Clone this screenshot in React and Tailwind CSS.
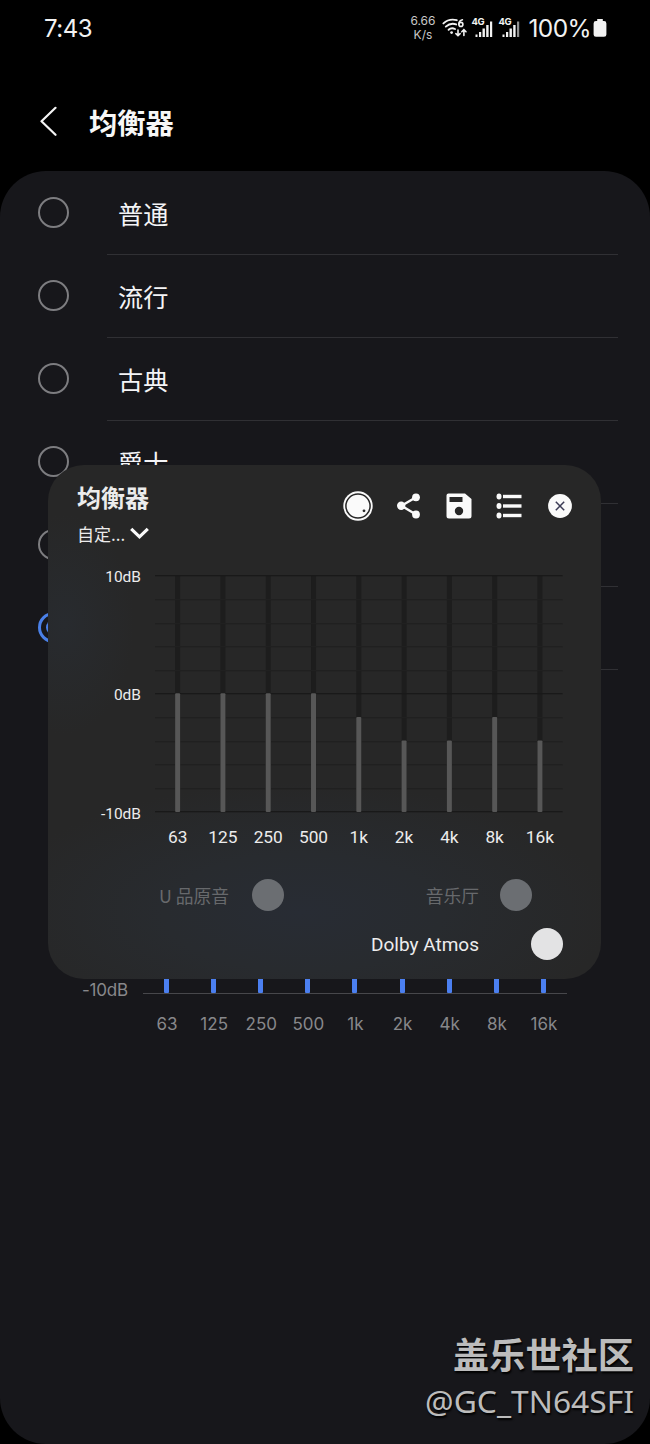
import React from "react";

const BANDS = [
  { label: "63", gain: 0 },
  { label: "125", gain: 0 },
  { label: "250", gain: 0 },
  { label: "500", gain: 0 },
  { label: "1k", gain: -2 },
  { label: "2k", gain: -4 },
  { label: "4k", gain: -4 },
  { label: "8k", gain: -2 },
  { label: "16k", gain: -4 },
];

const PRESETS = [
  { id: 1, label: "普通" },
  { id: 2, label: "流行" },
  { id: 3, label: "古典" },
  { id: 4, label: "爵士" },
  { id: 5, label: "" },
  { id: 6, label: "", selected: true },
];

function WifiIcon() {
  return (
    <svg className="h-[22px] w-[26px] shrink-0" viewBox="0 0 26 22" fill="none" stroke="#f2f2f2" strokeWidth="1.9" strokeLinecap="round">
      <path d="M1.400 6.400C5 3.100 10 2 14.800 3.200" />
      <path d="M3.800 9.600C6.800 7 10.600 6.200 14.200 7.400" />
      <path d="M6.600 12.800C8.200 11.300 10.800 10.900 13 12" />
      <circle cx="9.600" cy="15.600" r="1.400" fill="#f2f2f2" stroke="none" />
      <path d="M20.400 2.800C18 3.400 16.900 5 16.900 7.200" strokeWidth="1.600" />
      <circle cx="18.900" cy="7.400" r="2" strokeWidth="1.600" />
      <path d="M16 13v5.400M13.900 16.600l2.100 2.100 2.100-2.100M21.900 18.400V13M19.800 14.800l2.100-2.100 2.100 2.100" strokeWidth="1.600" />
    </svg>
  );
}

function Signal({ dim }) {
  return (
    <div className="relative h-[22px] w-[24px] shrink-0">
      <span className="absolute left-0 top-0 font-['Inter'] text-[9.5px] font-bold leading-[10px] tracking-[-0.5px] text-[#f2f2f2]">4G</span>
      <svg className="absolute bottom-[1px] left-[4px] h-[18px] w-[20px]" viewBox="0 0 20 18" fill="#f2f2f2">
        <rect x="0.500" y="14.5" width="2" height="2.5" />
        <rect x="4" y="12" width="2.200" height="5" />
        <rect x="7.500" y="8.5" width="2.400" height="8.5" />
        <rect x="11.200" y="5" width="2.400" height="12" />
        <rect x="15" y="1.5" width="2.200" height="15.5" opacity={dim ? 0.6 : 1} />
      </svg>
    </div>
  );
}

function StatusBar() {
  return (
    <div className="flex h-[56px] items-center pl-[44px] pr-[43px] font-['Inter'] text-[#f2f2f2]">
      <span className="mt-[1px] text-[24px] leading-none tracking-[-0.45px]">7:43</span>
      <div className="ml-auto flex items-center">
        <div className="mr-[6px] w-[27px] text-center text-[12px] leading-[14px] text-[#c8c8c8]">
          <div>6.66</div>
          <div>K/s</div>
        </div>
        <WifiIcon />
        <div className="ml-[3px] flex gap-[3px]">
          <Signal />
          <Signal dim />
        </div>
        <span className="ml-[6px] text-[24.5px] leading-none tracking-[-0.6px]">100%</span>
        <svg className="ml-[2px] h-[20px] w-[14px]" viewBox="0 0 14 20" fill="#f2f2f2">
          <path d="M4.2 1h5.6v2H11a2.4 2.4 0 0 1 2.4 2.4v11A2.4 2.4 0 0 1 11 18.800H3A2.4 2.4 0 0 1 .6 16.400v-11A2.400 2.400 0 0 1 3 3h1.200z" />
        </svg>
      </div>
    </div>
  );
}

function TopBar() {
  return (
    <div className="flex h-[115px] items-center pl-[39px]">
      <svg className="mt-[15px] h-[30px] w-[20px]" viewBox="0 0 20 30" fill="none" stroke="#f4f4f4" strokeWidth="2.200" strokeLinecap="round" strokeLinejoin="round">
        <path d="M16.500 1.800 2.500 15.300l14 13.500" />
      </svg>
      <h1 className="ml-[30px] mt-[17px] text-[28.3px] font-bold leading-[36px] text-[#f7f7f7]">均衡器</h1>
    </div>
  );
}

function PresetRow({ label, selected }) {
  return (
    <div className="relative flex h-[83px] items-center pl-[38px]">
      {selected ? (
        <span className="flex h-[31px] w-[31px] items-center justify-center rounded-full border-[3px] border-[#4a80e8]">
          <span className="h-[15px] w-[15px] rounded-full bg-[#4a80e8]" />
        </span>
      ) : (
        <span className="h-[31px] w-[31px] rounded-full border-2 border-[#7d7d80]" />
      )}
      <span className="ml-[49px] mt-[1px] text-[25.200px] leading-[36px] text-[#f4f4f6]">{label}</span>
      <span className="absolute bottom-[-1px] left-[107px] right-[32px] h-px bg-[#303034]" />
    </div>
  );
}

function BackgroundEqualizer() {
  return (
    <div className="mt-[304px]">
      <div className="flex">
        <div className="w-[128px] pt-[6px] text-right font-['Inter'] text-[17px] leading-[22px] tracking-[-0.2px] text-[#88888b]">-10dB</div>
        <div className="ml-[15px] grid h-[21px] w-[424px] grid-cols-9 border-b border-[#47474b]">
          {BANDS.map((b) => (
            <div key={b.label} className="flex justify-center">
              <span className="h-[20px] w-[5px] rounded-b-[1px] bg-[#4b7ff0]" />
            </div>
          ))}
        </div>
      </div>
      <div className="ml-[143.500px] mt-[12px] grid w-[424px] grid-cols-9 text-center font-['Inter'] text-[17px] leading-[22px] text-[#88888b]">
        {BANDS.map((b) => (
          <span key={b.label}>{b.label}</span>
        ))}
      </div>
    </div>
  );
}

function DialIcon() {
  return (
    <svg className="h-[32px] w-[32px]" viewBox="0 0 32 32">
      <circle cx="16" cy="16" r="14.700" fill="#fafafa" />
      <circle cx="16" cy="16" r="12.100" fill="none" stroke="#262626" strokeWidth="1.500" />
      <circle cx="22" cy="20.800" r="1.400" fill="#262626" />
    </svg>
  );
}

function ShareIcon() {
  return (
    <svg className="ml-[1px] h-[26px] w-[26px]" viewBox="0 0 26 26" fill="#fafafa" stroke="#fafafa">
      <path d="M20 4.300 5.500 12.800 20 21.500" fill="none" strokeWidth="2.400" />
      <circle cx="20" cy="4.300" r="3.900" stroke="none" />
      <circle cx="5.200" cy="12.800" r="4.200" stroke="none" />
      <circle cx="20" cy="21.500" r="3.900" stroke="none" />
    </svg>
  );
}

function SaveIcon() {
  return (
    <svg className="h-[26px] w-[26px]" viewBox="0 0 26 26">
      <path fill="#fafafa" fillRule="evenodd" d="M2.500.500H19L25.500 6v17a2.500 2.500 0 0 1-2.500 2.500H3A2.500 2.500 0 0 1 .500 23V2.500a2 2 0 0 1 2-2zM3.500 4v5h13V4zM13 13.800a4.200 4.200 0 1 0 0 8.400 4.200 4.200 0 0 0 0-8.400z" />
    </svg>
  );
}

function ListIcon() {
  return (
    <svg className="h-[26px] w-[26px]" viewBox="0 0 26 26" fill="#fafafa">
      {[3.500, 13, 22.500].map((y) => (
        <g key={y}>
          <ellipse cx="3" cy={y} rx="2.500" ry="3" />
          <rect x="7" y={y - 1.700} width="18.500" height="3.400" />
        </g>
      ))}
    </svg>
  );
}

function CloseIcon() {
  return (
    <svg className="h-[24px] w-[24px]" viewBox="0 0 24 24">
      <circle cx="12" cy="12" r="11.900" fill="#fafafa" />
      <path d="m7.800 7.800 8.400 8.400m0-8.400-8.400 8.400" stroke="#3b3b55" strokeWidth="1.500" />
    </svg>
  );
}

const TOOLS = [DialIcon, ShareIcon, SaveIcon, ListIcon, CloseIcon];

function Chart() {
  const step = 407.6 / 9;
  return (
    <svg className="h-[240px] w-[408px]" viewBox="0 0 408 240">
      {BANDS.map((b, i) => {
        const x = step * (i + 0.5) - 2.5;
        return <rect key={b.label} x={x} y="1" width="5" height="236" fill="#1d1d1d" />;
      })}
      {Array.from({ length: 11 }, (_, i) => (
        <rect key={i} x="0" y={Math.round(0.400 + i * 23.600)} width="407.600" height="1.300" fill={i % 5 === 0 ? "#191919" : "#202020"} />
      ))}
      {BANDS.map((b, i) => {
        const x = step * (i + 0.5) - 2.5;
        const y = 118.300 - b.gain * 11.800;
        return <rect key={b.label} x={x} y={y} width="5" height={237 - y} rx="1" fill="#575757" />;
      })}
    </svg>
  );
}

function Dialog() {
  return (
    <div className="absolute left-[48px] top-[465px] h-[513.500px] w-[553px] overflow-hidden rounded-[36px] bg-[#272727] bg-[radial-gradient(ellipse_310px_130px_at_46%_87%,#282c34_0%,#282b2f_45%,transparent_100%),radial-gradient(ellipse_70px_110px_at_3%_31%,#282b2f_0%,transparent_100%)] text-[#ececec]">
      <div className="flex h-[110px] justify-between pl-[29px] pr-[16px]">
        <div className="pt-[16px]">
          <h2 className="text-[24px] font-bold leading-[32px]">均衡器</h2>
          <div className="mt-[9px] flex items-center text-[17px] leading-[24px]">
            <span>自定...</span>
            <svg className="ml-[5px] mt-[-2px] h-[13px] w-[19px]" viewBox="0 0 19 13" fill="none" stroke="#fafafa" strokeWidth="3.200">
              <path d="m1.200 1.800 8.300 8 8.300-8" />
            </svg>
          </div>
        </div>
        <div className="flex h-[81px] items-center">
          {TOOLS.map((Icon, i) => (
            <span key={i} className="flex w-[50.500px] justify-center">
              <Icon />
            </span>
          ))}
        </div>
      </div>

      <div className="flex h-[240px]">
        <div className="flex w-[93px] flex-col text-right font-['Roboto'] text-[15.500px] leading-[20px]">
          <span className="mt-[-8px]">10dB</span>
          <span className="mt-[98px]">0dB</span>
          <span className="mt-[98.500px]">-10dB</span>
        </div>
        <div className="ml-[14px]">
          <Chart />
        </div>
      </div>
      <div className="ml-[107px] mt-[10px] grid w-[407.600px] grid-cols-9 text-center font-['Roboto'] text-[17.300px] leading-[24px]">
        {BANDS.map((b) => (
          <span key={b.label}>{b.label}</span>
        ))}
      </div>

      <div className="mt-[29px] flex h-[34px] items-center pl-[111px] pr-[69px] text-[17.800px] leading-[24px] text-[#67696c]">
        <span className="w-[93px] whitespace-nowrap">U 品原音</span>
        <span className="h-[32px] w-[32px] rounded-full bg-[#6b6e72]" />
        <span className="ml-auto mr-[21px]">音乐厅</span>
        <span className="h-[32px] w-[32px] rounded-full bg-[#6b6e72]" />
      </div>
      <div className="mt-[15px] flex h-[34px] items-center justify-end pr-[38px]">
        <span className="mt-[2px] font-['Roboto'] text-[19px] leading-[24px] text-[#ededed]">Dolby Atmos</span>
        <span className="ml-[52px] h-[32px] w-[32px] rounded-full bg-[#e3e3e4]" />
      </div>
    </div>
  );
}

export default function App() {
  return (
    <div className="relative h-[1444px] w-[650px] overflow-hidden bg-black font-['Noto_Sans_CJK_SC',sans-serif]">
      <StatusBar />
      <TopBar />
      <main className="h-[1273px] rounded-[46px] bg-[#17171b]">
        {PRESETS.map((p) => (
          <PresetRow key={p.id} label={p.label} selected={p.selected} />
        ))}
        <BackgroundEqualizer />
      </main>
      <Dialog />
      <div className="absolute bottom-[21px] right-[16px] text-right text-[#bcbcbc] [text-shadow:1px_2px_2px_#000]">
        <div className="text-[36.200px] font-bold leading-[52px]">盖乐世社区</div>
        <div className="font-['Noto_Sans'] text-[31.800px] leading-[44px]">@GC_TN64SFI</div>
      </div>
    </div>
  );
}
